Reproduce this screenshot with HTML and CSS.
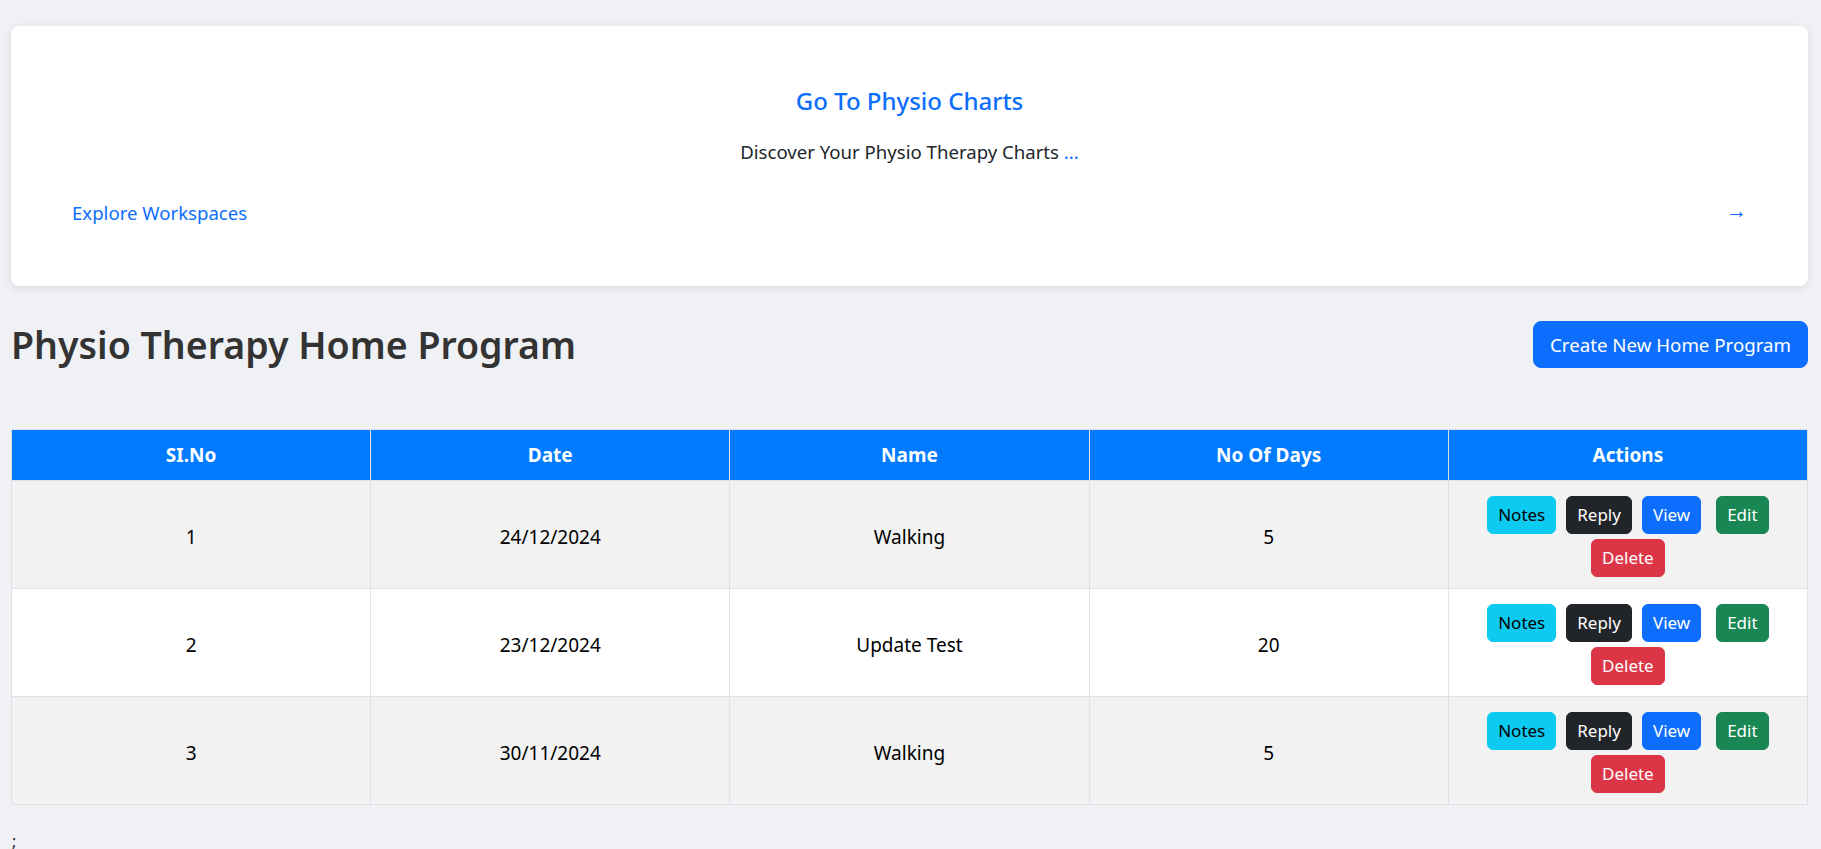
FILE: index.html
```html
<!DOCTYPE html>
<html lang="en">
<head>
<meta charset="utf-8">
<title>Physio Therapy Home Program</title>
<link rel="stylesheet" href="styles.css">
</head>
<body>
<main class="page">
  <section class="chart-card">
    <h5 class="chart-title">Go To Physio Charts</h5>
    <p class="chart-text">Discover Your Physio Therapy Charts <a href="#" class="more">...</a></p>
    <div class="chart-footer">
      <a href="#" class="explore">Explore Workspaces</a>
      <a href="#" class="arrow">→</a>
    </div>
  </section>

  <div class="program-head">
    <h1 class="program-title">Physio Therapy Home Program</h1>
    <button class="btn btn-lg btn-primary">Create New Home Program</button>
  </div>

  <table class="program-table">
    <thead>
      <tr>
        <th>SI.No</th>
        <th>Date</th>
        <th>Name</th>
        <th>No Of Days</th>
        <th>Actions</th>
      </tr>
    </thead>
    <tbody>
      <tr class="striped">
        <td>1</td>
        <td>24/12/2024</td>
        <td>Walking</td>
        <td>5</td>
        <td>
          <div class="actions">
            <button class="btn btn-info">Notes</button>
            <button class="btn btn-dark">Reply</button>
            <button class="btn btn-primary">View</button>
            <button class="btn btn-success btn-wide">Edit</button>
            <button class="btn btn-danger">Delete</button>
          </div>
        </td>
      </tr>
      <tr>
        <td>2</td>
        <td>23/12/2024</td>
        <td>Update Test</td>
        <td>20</td>
        <td>
          <div class="actions">
            <button class="btn btn-info">Notes</button>
            <button class="btn btn-dark">Reply</button>
            <button class="btn btn-primary">View</button>
            <button class="btn btn-success btn-wide">Edit</button>
            <button class="btn btn-danger">Delete</button>
          </div>
        </td>
      </tr>
      <tr class="striped">
        <td>3</td>
        <td>30/11/2024</td>
        <td>Walking</td>
        <td>5</td>
        <td>
          <div class="actions">
            <button class="btn btn-info">Notes</button>
            <button class="btn btn-dark">Reply</button>
            <button class="btn btn-primary">View</button>
            <button class="btn btn-success btn-wide">Edit</button>
            <button class="btn btn-danger">Delete</button>
          </div>
        </td>
      </tr>
    </tbody>
  </table>
  <p class="tail">;</p>
</main>
</body>
</html>
```

FILE: styles.css
```css
* { box-sizing: border-box; }

html, body {
  margin: 0;
  padding: 0;
  background: #f0f1f5;
  font-family: "Noto Sans", "Open Sans", sans-serif;
  color: #212529;
  font-size: 16px;
}

.page {
  padding: 26px 13px 0 11px;
}

.chart-card {
  background: #ffffff;
  border-radius: 8px;
  box-shadow: 0 2px 8px rgba(0, 0, 0, 0.10);
  padding: 60px 61px 60px;
  text-align: center;
}

.chart-title {
  margin: 0 0 23px;
  font-size: 24px;
  line-height: 29px;
  font-weight: 500;
  color: #0d6efd;
}

.chart-text {
  margin: 0 0 34px;
  font-size: 18.6px;
  line-height: 27px;
}

.more { color: #0d6efd; text-decoration: none; }

.chart-footer {
  display: flex;
  justify-content: space-between;
  align-items: center;
  height: 27px;
  font-size: 18.6px;
  line-height: 27px;
}

.explore, .arrow {
  color: #0d6efd;
  text-decoration: none;
}

.arrow {
  font-size: 21px;
  line-height: 21px;
  font-weight: 700;
  margin-bottom: 5px;
}

.program-head {
  display: flex;
  justify-content: space-between;
  align-items: center;
  margin-top: 35px;
}

.program-title {
  margin: 0;
  font-size: 37.5px;
  line-height: 47px;
  font-weight: 600;
  color: #333333;
}

.btn {
  display: inline-block;
  border: 1px solid transparent;
  border-radius: 6px;
  padding: 6px 10px;
  font-family: inherit;
  font-size: 17px;
  line-height: 24px;
  color: #ffffff;
  cursor: pointer;
}

.btn-lg {
  padding: 8px 16px;
  font-size: 18.7px;
  line-height: 29px;
  border-radius: 8px;
}

.btn-primary { background: #0d6efd; border-color: #0d6efd; }
.btn-info { background: #0dcaf0; border-color: #0dcaf0; color: #000000; }
.btn-dark { background: #212529; border-color: #212529; }
.btn-success { background: #198754; border-color: #198754; }
.btn-danger { background: #dc3545; border-color: #dc3545; }

.program-table {
  width: 100%;
  margin-top: 61px;
  border-collapse: collapse;
  table-layout: fixed;
  border: 1px solid #dee2e6;
}

.program-table th,
.program-table td {
  border: 1px solid #dee2e6;
  text-align: center;
  vertical-align: middle;
}

.program-table th {
  background: #007bff;
  color: #ffffff;
  font-weight: 700;
  font-size: 19px;
  line-height: 28px;
  height: 51px;
  padding: 0 8px;
}

.program-table td {
  font-size: 19px;
  line-height: 28px;
  padding: 15px 8px 11px;
  background: #ffffff;
  color: #000000;
}

.program-table tr.striped td { background: #f2f2f2; }

.actions {
  display: flex;
  flex-wrap: wrap;
  justify-content: center;
  column-gap: 10px;
  row-gap: 5px;
}

.btn-wide { margin-left: 5px; }

.tail {
  margin: 24px 0 0 1px;
  font-size: 16px;
  line-height: 24px;
}
```
